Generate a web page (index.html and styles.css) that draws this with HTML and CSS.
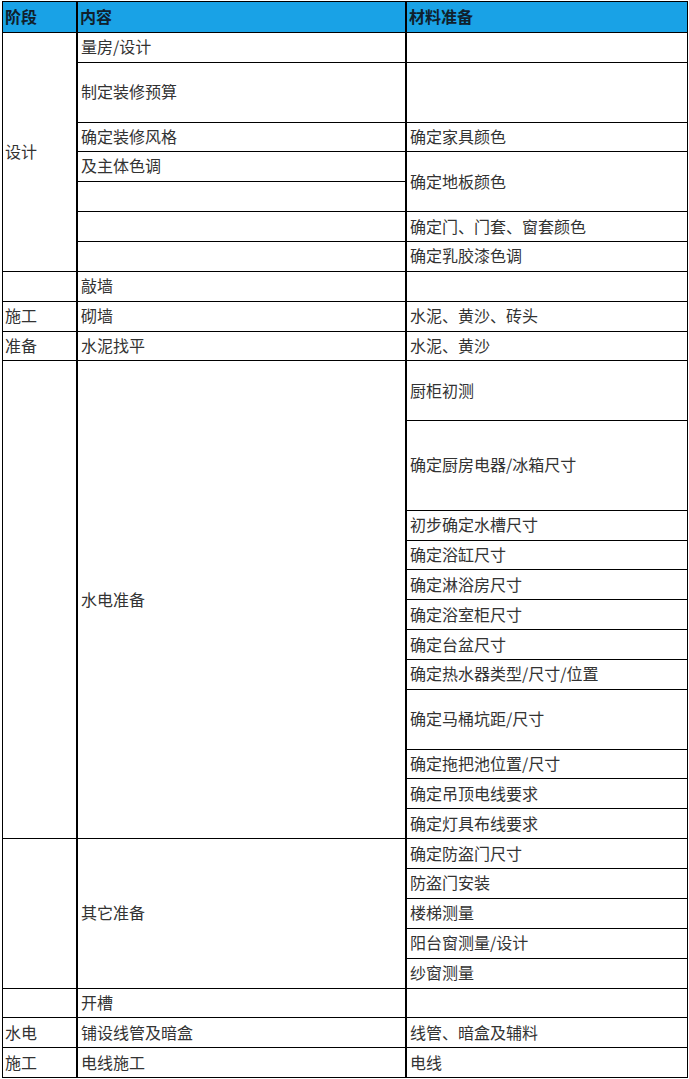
FILE: index.html
```html
<!DOCTYPE html>
<html lang="zh-CN">
<head>
<meta charset="utf-8">
<title>装修准备</title>
<link rel="stylesheet" href="styles.css">
</head>
<body>
<div class="sheet">
  <div class="cell c1 head">阶段</div>
  <div class="cell c2 head">内容</div>
  <div class="cell c3 head">材料准备</div>

  <div class="cell c1 s8">设计</div>
  <div class="cell c2">量房/设计</div>
  <div class="cell c3"></div>
  <div class="cell c2 s2">制定装修预算</div>
  <div class="cell c3 s2"></div>
  <div class="cell c2">确定装修风格</div>
  <div class="cell c3">确定家具颜色</div>
  <div class="cell c2 top">及主体色调</div>
  <div class="cell c3 s2">确定地板颜色</div>
  <div class="cell c2"></div>
  <div class="cell c2"></div>
  <div class="cell c3">确定门、门套、窗套颜色</div>
  <div class="cell c2"></div>
  <div class="cell c3">确定乳胶漆色调</div>

  <div class="cell c1"></div>
  <div class="cell c2">敲墙</div>
  <div class="cell c3"></div>
  <div class="cell c1">施工</div>
  <div class="cell c2">砌墙</div>
  <div class="cell c3">水泥、黄沙、砖头</div>
  <div class="cell c1">准备</div>
  <div class="cell c2">水泥找平</div>
  <div class="cell c3">水泥、黄沙</div>

  <div class="cell c1 s16"></div>
  <div class="cell c2 s16">水电准备</div>
  <div class="cell c3 s2">厨柜初测</div>
  <div class="cell c3 s3">确定厨房电器/冰箱尺寸</div>
  <div class="cell c3">初步确定水槽尺寸</div>
  <div class="cell c3">确定浴缸尺寸</div>
  <div class="cell c3">确定淋浴房尺寸</div>
  <div class="cell c3">确定浴室柜尺寸</div>
  <div class="cell c3">确定台盆尺寸</div>
  <div class="cell c3">确定热水器类型/尺寸/位置</div>
  <div class="cell c3 s2">确定马桶坑距/尺寸</div>
  <div class="cell c3">确定拖把池位置/尺寸</div>
  <div class="cell c3">确定吊顶电线要求</div>
  <div class="cell c3">确定灯具布线要求</div>

  <div class="cell c1 s5"></div>
  <div class="cell c2 s5">其它准备</div>
  <div class="cell c3">确定防盗门尺寸</div>
  <div class="cell c3">防盗门安装</div>
  <div class="cell c3">楼梯测量</div>
  <div class="cell c3">阳台窗测量/设计</div>
  <div class="cell c3">纱窗测量</div>

  <div class="cell c1"></div>
  <div class="cell c2">开槽</div>
  <div class="cell c3"></div>
  <div class="cell c1">水电</div>
  <div class="cell c2">铺设线管及暗盒</div>
  <div class="cell c3">线管、暗盒及辅料</div>
  <div class="cell c1">施工</div>
  <div class="cell c2">电线施工</div>
  <div class="cell c3">电线</div>
</div>
</body>
</html>
```
FILE: styles.css
```css
html, body {
  margin: 0;
  padding: 0;
  background: #ffffff;
}
body {
  padding: 1px 0 0 2px;
  font-family: "Noto Sans CJK SC", "Noto Sans", sans-serif;
  font-size: 16px;
  color: #333333;
}
.sheet {
  display: grid;
  grid-template-columns: 75px 329px 281px;
  grid-template-rows: 31px;
  grid-auto-rows: 29.86px;
  border-top: 1px solid #000;
  border-left: 1px solid #000;
  width: max-content;
}
.cell {
  box-sizing: border-box;
  border-bottom: 1px solid #000;
  display: flex;
  align-items: center;
  padding-left: 3px;
  padding-bottom: 2px;
  line-height: 1;
  white-space: nowrap;
  overflow: hidden;
}
.c1 { grid-column: 1; border-right: 2px solid #000; padding-left: 2px; }
.c2 { grid-column: 2; border-right: 2px solid #000; }
.c3 { grid-column: 3; border-right: 1px solid #000; }
.head {
  grid-row: 1;
  background: #19a2e6;
  font-weight: 700;
  color: #10202c;
  padding-left: 2px;
}
.s2 { grid-row-end: span 2; }
.s3 { grid-row-end: span 3; }
.s5 { grid-row-end: span 5; }
.s8 { grid-row-end: span 8; }
.s16 { grid-row-end: span 16; }
.top { align-items: flex-start; padding-top: 5px; }
```
